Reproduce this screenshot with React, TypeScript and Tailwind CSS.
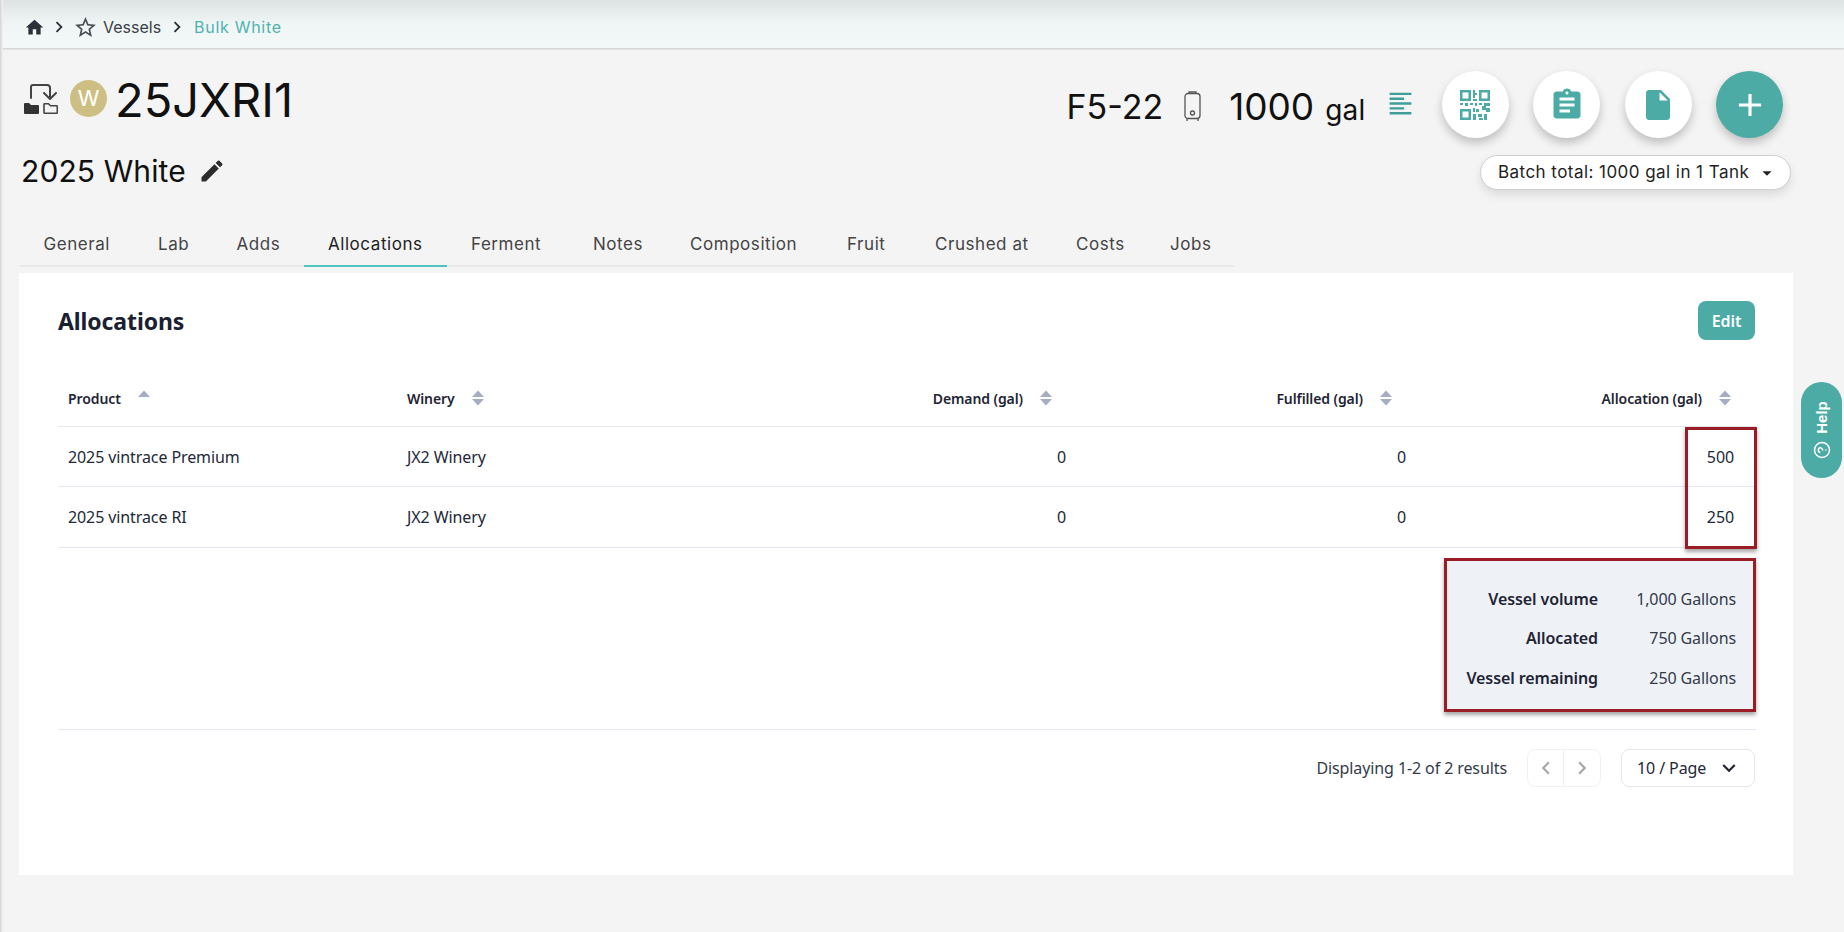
import React from "react";
import { MdHome, MdStarBorder, MdEdit, MdAssignment, MdInsertDriveFile, MdAdd, MdChevronRight, MdChevronLeft, MdKeyboardArrowDown, MdArrowDropDown, MdFormatAlignLeft } from "react-icons/md";
import { CircleHelp } from "lucide-react";

const tabs = [
  { t: "General", w: "w-[114.5px]" },
  { t: "Lab", w: "w-[78.5px]" },
  { t: "Adds", w: "w-[91.5px]" },
  { t: "Allocations", w: "w-[143px]" },
  { t: "Ferment", w: "w-[122px]" },
  { t: "Notes", w: "w-[97px]" },
  { t: "Composition", w: "w-[157px]" },
  { t: "Fruit", w: "w-[88px]" },
  { t: "Crushed at", w: "w-[141px]" },
  { t: "Costs", w: "w-[94px]" },
  { t: "Jobs", w: "w-[88px]" },
];

function Sort({ up }: { up?: boolean }) {
  return (
    <svg width="14" height="16" viewBox="0 0 14 16" className="shrink-0">
      <path d="M7 0.5 L13 7 H1 Z" fill="#a4adc2" />
      {!up && <path d="M7 15.5 L13 9 H1 Z" fill="#a4adc2" />}
    </svg>
  );
}

function Qr() {
  return (
    <svg width="30" height="30" viewBox="0 0 30 30" fill="#4caba4">
      <path fillRule="evenodd" d="M0 0h11v11H0zM2.5 2.5v6h6v-6zM19 0h11v11H19zM21.5 2.5v6h6v-6zM0 19h11v11H0zM2.5 21.5v6h6v-6z" />
      <path d="M13 0h2v3h2v2h-2v3h-2zM13 9h4v2h-4zM0 13h3v2H0zM5 13h3v3H5zM10 13h3v2h-3zM15 13h2v3h-2zM19 13h3v2h-3zM24 13h6v3h-6zM22 16h4v4h-4zM26 18h4v4h-4zM13 18h2v4h-2zM16 19h3v3h-3zM13 24h3v6h-3zM18 24h4v3h-4zM24 24h3v6h-3zM19 28h4v2h-4z" />
    </svg>
  );
}

function Tank() {
  return (
    <svg width="19" height="31" viewBox="0 0 19 31" fill="none" stroke="#555" strokeWidth="1.3">
      <path d="M6 2.5 V1 H13 V2.5" />
      <rect x="2" y="2.5" width="15" height="25" rx="3" />
      <circle cx="9.5" cy="22" r="2" />
      <path d="M4 27.5 V30 M15 27.5 V30" />
    </svg>
  );
}

function Transfer() {
  return (
    <svg width="34" height="30" viewBox="0 0 34 30" fill="none">
      <path d="M7 14V3a2 2 0 0 1 2-2h14a3 3 0 0 1 3 3v10" stroke="#444" strokeWidth="2" strokeLinecap="round" />
      <path d="M20 9l6 6 6-6" stroke="#444" strokeWidth="2" strokeLinecap="round" strokeLinejoin="round" />
      <path d="M0 20a1 1 0 0 1 1-1h4l2 2h7a1 1 0 0 1 1 1v7a1 1 0 0 1-1 1H1a1 1 0 0 1-1-1z" fill="#333" />
      <path d="M20 20.2a.5.5 0 0 1 .5-.5h4l2 2h6a.8.8 0 0 1 .8.8v6a.8.8 0 0 1-.8.8H20.8a.8.8 0 0 1-.8-.8z" stroke="#444" strokeWidth="1.6" />
    </svg>
  );
}

function RoundBtn({ children, teal }: { children: React.ReactNode; teal?: boolean }) {
  return (
    <div className={"flex h-[67px] w-[67px] items-center justify-center rounded-full shadow-[0_5px_10px_rgba(0,0,0,0.22)] " + (teal ? "bg-[#4caba4]" : "bg-white")}>
      {children}
    </div>
  );
}

function Head({ label, right, up, w, pr }: { label: string; right?: boolean; up?: boolean; w: string; pr: string }) {
  return (
    <div className={"flex items-center gap-[16px] text-[14px] font-semibold tracking-[-0.1px] text-[#1f2433] " + w + " " + pr + " " + (right ? "justify-end" : "")}>
      <span>{label}</span>
      <Sort up={up} />
    </div>
  );
}

function Row({ a, b, c, h }: { a: string; b: string; c: string; h: string }) {
  return (
    <div className={"flex items-center border-b border-[#e4e7ef] " + h}>
      <div className="w-[339px] pl-[10px]">{a}</div>
      <div className="w-[340px] pl-[10px]">{b}</div>
      <div className="w-[339px] pr-[10px] text-right">0</div>
      <div className="w-[340px] pr-[10px] text-right">0</div>
      <div className="w-[340px] pr-[22px] text-right">{c}</div>
    </div>
  );
}

function Sum({ k, v }: { k: string; v: string }) {
  return (
    <div className="flex h-[39.5px] items-center justify-end">
      <span className="font-semibold text-[#1f2433]">{k}</span>
      <span className="w-[138px] text-right text-[#333a48]">{v}</span>
    </div>
  );
}

export default function App() {
  return (
    <div className="relative h-[932px] overflow-hidden bg-[#f4f4f4] font-['Inter',sans-serif] text-[#111]">
      <div className="absolute left-0 top-0 h-full w-[3px] bg-gradient-to-r from-[#d4d4d4] to-[#f4f4f4]" />

      <div className="flex h-[48px] items-center bg-gradient-to-b from-[#dde2e2] via-[#f0f5f5] to-[#f3f8f8] pl-[24px] pt-[6px] text-[16px] shadow-[0_1px_2px_rgba(0,0,0,0.18)]">
        <MdHome className="text-[21px] text-[#2c3038]" />
        <MdChevronRight className="ml-[3px] text-[22px] text-[#2c3038]" />
        <MdStarBorder className="ml-[3px] text-[25px] text-[#4a4d55]" />
        <span className="ml-[5px] text-[#3b3f47]">Vessels</span>
        <MdChevronRight className="ml-[5px] text-[22px] text-[#2c3038]" />
        <span className="ml-[6px] tracking-[0.7px] text-[#4fb3ad]">Bulk White</span>
      </div>

      <div className="flex h-[173px] justify-between">
        <div className="pl-[21px] pt-[32px]">
          <div className="flex h-[37px] items-center">
            <span className="ml-[3px]"><Transfer /></span>
            <div className="ml-[12px] flex h-[37px] w-[37px] items-center justify-center rounded-full bg-[#cdbf83] text-[22px] text-white">W</div>
            <span className="ml-[8px] mt-[2px] text-[47px] leading-none">25JXRI1</span>
          </div>
          <div className="mt-[34px] flex items-center">
            <span className="text-[30px] leading-[40px] tracking-[0.1px]">2025 White</span>
            <MdEdit className="ml-[12px] text-[28px] text-[#2c2c2c]" />
          </div>
        </div>

        <div className="flex w-[820px] flex-col items-end pr-[53px] pt-[23px]">
          <div className="mr-[8px] flex items-start whitespace-nowrap">
            <span className="mt-[16px] text-[34px] leading-[40px]">F5-22</span>
            <span className="ml-[20px] mt-[20px]"><Tank /></span>
            <span className="ml-[27px] mt-[16px] text-[37px] leading-[40px]">1000</span>
            <span className="ml-[11px] mt-[21px] text-[28px] leading-[36px] tracking-[0.2px]">gal</span>
            <MdFormatAlignLeft className="ml-[20px] mt-[18px] text-[29px] text-[#3f9f98]" />
            <div className="ml-[27px] flex gap-[24.5px]">
              <RoundBtn><Qr /></RoundBtn>
              <RoundBtn><MdAssignment className="text-[36px] text-[#4caba4]" /></RoundBtn>
              <RoundBtn><MdInsertDriveFile className="text-[36px] text-[#4caba4]" /></RoundBtn>
              <RoundBtn teal><MdAdd className="text-[38px] text-white" /></RoundBtn>
            </div>
          </div>
          <div className="mt-[17px] flex h-[35px] w-[311px] items-center justify-between rounded-full border border-[#cfcfcf] bg-white pl-[17px] pr-[12px] text-[17px] tracking-[0.45px] text-[#222] shadow-[0_5px_10px_rgba(0,0,0,0.1)]">
            <span>Batch total: 1000 gal in 1 Tank</span>
            <MdArrowDropDown className="text-[22px] text-[#222]" />
          </div>
        </div>
      </div>

      <div className="ml-[19.5px] flex h-[46px] w-[1214.5px] border-b-2 border-[#e8e8e8] text-[17px] tracking-[0.55px] text-[#444]">
        {tabs.map(({ t, w }) => (
          <div key={t} className={"flex h-[46px] items-center border-b-2 pl-[24px] pt-[3px] " + w + " " + (t === "Allocations" ? "border-[#4fc4bd] text-[#222]" : "border-transparent")}>
            {t}
          </div>
        ))}
      </div>

      <div className="ml-[19px] mt-[6px] h-[602px] w-[1774px] bg-white pl-[39px] pr-[37px] pt-[28px] font-['Noto_Sans',sans-serif] text-[16px] tracking-[-0.1px] text-[#232836]">
        <div className="flex h-[39px] items-center justify-between">
          <h2 className="mt-[1px] text-[23px] font-bold text-[#1a2030]">Allocations</h2>
          <div className="mr-[1px] flex h-[39px] w-[57px] items-center justify-center rounded-[8px] bg-[#4caba4] text-[16px] font-semibold text-white">Edit</div>
        </div>

        <div className="mt-[30px] flex h-[57px] items-center border-b border-[#e4e7ef]">
          <div className="w-[339px] pl-[10px]"><Head label="Product" up w="" pr="" /></div>
          <div className="w-[340px] pl-[10px]"><Head label="Winery" w="" pr="" /></div>
          <Head label="Demand (gal)" right w="w-[339px]" pr="pr-[23px]" />
          <Head label="Fulfilled (gal)" right w="w-[340px]" pr="pr-[23px]" />
          <Head label="Allocation (gal)" right w="w-[340px]" pr="pr-[24px]" />
        </div>

        <div className="relative">
          <Row a="2025 vintrace Premium" b="JX2 Winery" c="500" h="h-[60px]" />
          <Row a="2025 vintrace RI" b="JX2 Winery" c="250" h="h-[61px]" />
          <div className="absolute -right-[1px] top-0 h-[122px] w-[72px] border-[3px] border-[#9b1c24] shadow-[0_3px_4px_rgba(0,0,0,0.35)]" />
        </div>

        <div className="mt-[10px] flex justify-end">
          <div className="h-[154px] w-[312px] border-[3px] border-[#9b1c24] bg-[#eef2f7] pr-[17px] pt-[18px] shadow-[0_3px_4px_rgba(0,0,0,0.35)]">
            <Sum k="Vessel volume" v="1,000 Gallons" />
            <Sum k="Allocated" v="750 Gallons" />
            <Sum k="Vessel remaining" v="250 Gallons" />
          </div>
        </div>

        <div className="mt-[17px] flex items-center justify-end border-t border-[#e4e7ef] pt-[19px]">
          <span className="text-[#333a48]">Displaying 1-2 of 2 results</span>
          <div className="ml-[20px] flex h-[38px] w-[74px] rounded-[8px] border border-[#f1f1f3]">
            <div className="flex w-1/2 items-center justify-center border-r border-[#f1f1f3]"><MdChevronLeft className="text-[26px] text-[#a8a8a8]" /></div>
            <div className="flex w-1/2 items-center justify-center"><MdChevronRight className="text-[26px] text-[#a8a8a8]" /></div>
          </div>
          <div className="ml-[20px] mr-[1px] flex h-[38px] w-[134px] items-center justify-between rounded-[8px] border border-[#e4e7ef] pl-[15px] pr-[12px]">
            <span>10 / Page</span>
            <MdKeyboardArrowDown className="text-[26px] text-[#1f2433]" />
          </div>
        </div>
      </div>

      <div className="absolute left-[1801px] top-[382px] flex h-[96px] w-[41px] flex-col items-center justify-center gap-[8px] rounded-full bg-[#4caba4] text-white">
        <div className="flex h-[32px] w-[16px] items-center justify-center">
          <span className="-rotate-90 whitespace-nowrap font-['Liberation_Sans',sans-serif] text-[15px] font-bold leading-none">Help</span>
        </div>
        <CircleHelp className="h-[18px] w-[18px] -rotate-90" />
      </div>
    </div>
  );
}
